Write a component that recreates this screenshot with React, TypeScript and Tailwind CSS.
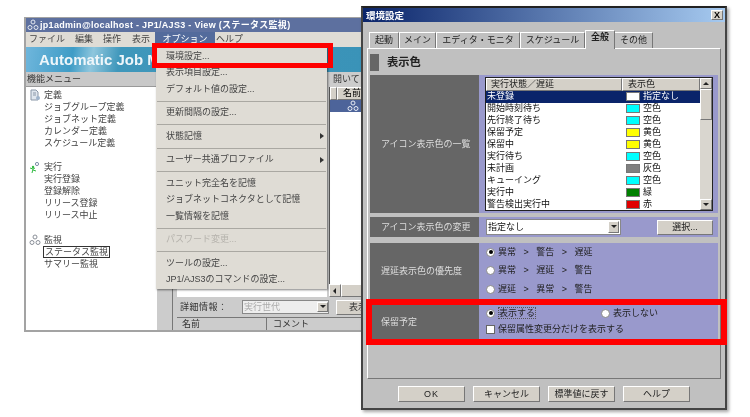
import type { ReactNode } from 'react';

const menuItems = [
  { label: '環境設定...' },
  { label: '表示項目設定...' },
  { label: 'デフォルト値の設定...', sep: true },
  { label: '更新間隔の設定...', sep: true },
  { label: '状態記憶', arrow: true, sep: true },
  { label: 'ユーザー共通プロファイル', arrow: true, sep: true },
  { label: 'ユニット完全名を記憶' },
  { label: 'ジョブネットコネクタとして記憶' },
  { label: '一覧情報を記憶', sep: true },
  { label: 'パスワード変更...', disabled: true, sep: true },
  { label: 'ツールの設定...' },
  { label: 'JP1/AJS3のコマンドの設定...' },
];

const statusRows = [
  { name: '未登録', color: 'bg-white', label: '指定なし', selected: true },
  { name: '開始時刻待ち', color: 'bg-[#00ffff]', label: '空色' },
  { name: '先行終了待ち', color: 'bg-[#00ffff]', label: '空色' },
  { name: '保留予定', color: 'bg-[#ffff00]', label: '黄色' },
  { name: '保留中', color: 'bg-[#ffff00]', label: '黄色' },
  { name: '実行待ち', color: 'bg-[#00ffff]', label: '空色' },
  { name: '未計画', color: 'bg-[#808080]', label: '灰色' },
  { name: 'キューイング', color: 'bg-[#00ffff]', label: '空色' },
  { name: '実行中', color: 'bg-[#008000]', label: '緑' },
  { name: '警告検出実行中', color: 'bg-[#e00000]', label: '赤' },
];

const raised = 'border border-t-white border-l-white border-r-[#777] border-b-[#777]';

function Arrow({ dir }: { dir: 'up' | 'down' | 'left' }) {
  const points = dir === 'up' ? '0,4 3,1 6,4' : dir === 'down' ? '0,1 6,1 3,4' : '4,0 4,6 1,3';
  return (
    <svg width="6" height="6" viewBox="0 0 6 6">
      <polygon points={points} fill="#222" />
    </svg>
  );
}

function Radio({ on }: { on?: boolean }) {
  return (
    <span className="flex h-[9px] w-[9px] shrink-0 items-center justify-center rounded-full border border-[#888] bg-white">
      {on && <span className="h-[4px] w-[4px] rounded-full bg-black" />}
    </span>
  );
}

function RadioRow({ text, on }: { text: string; on?: boolean }) {
  return (
    <div className="flex items-center gap-[3px]">
      <Radio on={on} />
      <span className="whitespace-pre">{text}</span>
    </div>
  );
}

function Section({ title, className, children }: { title: string; className: string; children: ReactNode }) {
  return (
    <div className={`flex shrink-0 ${className}`}>
      <div className="flex w-[109px] shrink-0 items-center bg-[#666666] pl-[11px] text-[#dddddd]">{title}</div>
      <div className="flex-1 bg-[#9999cc]">{children}</div>
    </div>
  );
}

function DialogButton({ children, wide }: { children: ReactNode; wide?: boolean }) {
  return (
    <div className={`flex h-[16px] items-center justify-center bg-[#d4d0c8] text-[#222] ${raised} ${wide ? 'tracking-[1px]' : ''} w-[67px]`}>
      {children}
    </div>
  );
}

function DefineIcon() {
  return (
    <svg width="12" height="12" viewBox="0 0 12 12">
      <path d="M2 1h5l2 2v8H2z" fill="#dfe6ee" stroke="#8a97a8" />
      <path d="M4 4h3M4 6h3" stroke="#8a97a8" />
      <circle cx="9" cy="9" r="2" fill="#9fb4cc" />
    </svg>
  );
}

function RunIcon() {
  return (
    <svg width="12" height="12" viewBox="0 0 12 12">
      <circle cx="8" cy="2" r="1.6" fill="none" stroke="#7d8fa8" />
      <circle cx="4" cy="5" r="1.2" fill="#33bb44" />
      <path d="M1 6l3 1 2-1M4 7L3 11M4 8l3 1" stroke="#33bb44" fill="none" />
    </svg>
  );
}

function WatchIcon({ color = '#8a8f98' }: { color?: string }) {
  return (
    <svg width="12" height="12" viewBox="0 0 12 12">
      <circle cx="6" cy="3" r="2" fill="none" stroke={color} />
      <circle cx="3" cy="8.5" r="2" fill="none" stroke={color} />
      <circle cx="9" cy="8.5" r="2" fill="none" stroke={color} />
    </svg>
  );
}

function TreeGroup({ icon, title, items, marked }: { icon: ReactNode; title: string; items: string[]; marked?: string }) {
  return (
    <div className="mb-[12.5px]">
      <div className="flex h-[12px] items-center gap-[3px] pl-[3px]">
        {icon}
        <span>{title}</span>
      </div>
      {items.map(item => (
        <div key={item} className="flex h-[12px] items-center pl-[18px]">
          <span className={item === marked ? 'border border-[#333] px-px leading-[10px] -ml-px' : ''}>{item}</span>
        </div>
      ))}
    </div>
  );
}

function MainWindow() {
  return (
    <div className="absolute left-[24px] top-[17px] flex h-[315px] w-[338px] flex-col border-b-2 border-l-2 border-t border-[#a3a3a3] bg-[#cccccc]">
      <div className="flex h-[14px] shrink-0 items-center gap-px bg-[#5d709f] pl-[1px] text-[9px] font-bold tracking-[0.3px] text-white">
        <WatchIcon color="#e4e8f0" />
        <span className="whitespace-nowrap">jp1admin@localhost - JP1/AJS3 - View (ステータス監視)</span>
      </div>
      <div className="relative h-[15px] shrink-0 bg-[#dfdcd5]">
        <div className="flex h-full items-center whitespace-nowrap pl-[3px] text-[#444]">
          <span className="w-[46px]">ファイル</span>
          <span className="w-[28px]">編集</span>
          <span className="w-[29px]">操作</span>
          <span className="w-[23px]">表示</span>
          <span className="flex h-full w-[60px] items-center justify-center bg-[#536b9c] text-white">オプション</span>
          <span className="pl-[1px]">ヘルプ</span>
        </div>
      </div>
      <div className="flex h-[25px] shrink-0 items-center bg-[linear-gradient(100deg,#6fb6dc_0%,#3f9cc6_14%,#8ec6dd_20%,#3f97bb_28%,#3a93b8_100%)] pl-[13px] text-[15px] leading-none font-bold whitespace-nowrap text-[#eef6fa]">
        Automatic Job M
      </div>
      <div className="flex min-h-0 flex-1">
        <div className="flex w-[131px] shrink-0 flex-col">
          <div className="flex h-[15px] shrink-0 items-center border-b border-[#999] bg-[#c8c8c8] pl-[1px] text-[#333]">機能メニュー</div>
          <div className="flex-1 bg-white pt-[2px] text-[#444]">
            <TreeGroup icon={<DefineIcon />} title="定義" items={['ジョブグループ定義', 'ジョブネット定義', 'カレンダー定義', 'スケジュール定義']} />
            <TreeGroup icon={<RunIcon />} title="実行" items={['実行登録', '登録解除', 'リリース登録', 'リリース中止']} />
            <TreeGroup icon={<WatchIcon />} title="監視" items={['ステータス監視', 'サマリー監視']} marked="ステータス監視" />
          </div>
        </div>
        <div className="flex min-w-0 flex-1 bg-[#cccccc] pl-[15px]">
          <div className="flex w-[5px] shrink-0 border-l border-[#777]" />
          <div className="flex min-h-0 min-w-0 flex-1 flex-col overflow-hidden">
            <div className="flex h-[225px] shrink-0">
              <div className="mt-[15px] w-[150px] shrink-0 bg-white" />
              <div className="ml-[2px] flex min-w-0 flex-1 flex-col overflow-hidden">
                <div className="flex h-[15px] shrink-0 items-center pl-[4px] whitespace-nowrap text-[#333]">開いて</div>
                <div className="flex h-[13px] shrink-0 border-l border-[#555] bg-[#d4d0c8]">
                  <span className={`w-[14px] ${raised}`} />
                  <span className={`flex-1 pl-[5px] whitespace-nowrap ${raised}`}>名前</span>
                </div>
                <div className="flex-1 border-l border-[#555] bg-white">
                  <div className="flex h-[12px] items-center bg-[#4d649a] pl-[17px]">
                    <WatchIcon color="#e8ecf4" />
                  </div>
                </div>
                <div className="flex h-[13px] shrink-0 items-center bg-[#d4d0c8]">
                  <span className={`flex h-[13px] w-[12px] items-center justify-center ${raised}`}><Arrow dir="left" /></span>
                  <span className={`h-[13px] flex-1 ${raised}`} />
                </div>
              </div>
            </div>
            <div className="flex h-[20px] shrink-0 items-center pl-[3px] text-[#333]">
              <span className="w-[62px] shrink-0 tracking-[0.5px]">詳細情報：</span>
              <div className="flex h-[14px] w-[87px] shrink-0 items-center justify-between border border-[#888] bg-[#eeeeee] pl-[1px] text-[#aaa]">
                <span>実行世代</span>
                <span className={`flex h-[10px] w-[11px] items-center justify-center bg-[#d4d0c8] ${raised}`}><Arrow dir="down" /></span>
              </div>
              <div className={`ml-[7px] flex h-[15px] w-[40px] shrink-0 items-center pl-[12px] whitespace-nowrap bg-[#d4d0c8] ${raised}`}>表示</div>
            </div>
            <div className="flex min-h-0 flex-1 border-t border-[#777] text-[#333]">
              <span className="w-[90px] border-r border-[#777] pl-[5px] leading-[12px]">名前</span>
              <span className="pl-[6px] leading-[12px]">コメント</span>
            </div>
          </div>
        </div>
      </div>
    </div>
  );
}

function OptionMenu() {
  return (
    <div className="absolute left-[156px] top-[46px] w-[171px] bg-[#dfdcd5] pt-[2px] pb-px text-[#444] shadow-[1px_1px_2px_rgba(0,0,0,0.5)]">
      {menuItems.map(item => (
        <div key={item.label}>
          <div className={`flex h-[16.5px] items-center justify-between pl-[10px] pr-[3px] whitespace-nowrap ${item.disabled ? 'text-[#b5b2ac]' : ''}`}>
            <span>{item.label}</span>
            {item.arrow && (
              <svg width="4" height="6" viewBox="0 0 4 6">
                <polygon points="0,0 4,3 0,6" fill="#333" />
              </svg>
            )}
          </div>
          {item.sep && <div className="mx-[1px] my-[3px] h-px bg-[#aaa8a2]" />}
        </div>
      ))}
    </div>
  );
}

function StatusList() {
  return (
    <div className="ml-[6px] mr-[5px] mt-[2px] flex h-[134px] border border-[#222] bg-white">
      <div className="flex min-w-0 flex-1 flex-col">
        <div className="flex h-[13px] shrink-0 bg-[#d4d0c8] text-[#222]">
          <span className={`w-[136px] pl-[4px] ${raised}`}>実行状態／遅延</span>
          <span className={`flex-1 pl-[5px] ${raised}`}>表示色</span>
        </div>
        {statusRows.map(row => (
          <div key={row.name} className={`flex min-h-0 flex-1 items-center ${row.selected ? 'bg-[#0a246a] text-white' : 'text-[#111]'}`}>
            <span className="w-[136px] pl-px">{row.name}</span>
            <span className={`ml-[4px] h-[9px] w-[14px] border border-[#777] ${row.color}`} />
            <span className="ml-[3px]">{row.label}</span>
          </div>
        ))}
      </div>
      <div className="flex w-[12px] shrink-0 flex-col bg-[#d9d6cf]">
        <span className={`flex h-[11px] items-center justify-center bg-[#d4d0c8] ${raised}`}><Arrow dir="up" /></span>
        <span className={`h-[31px] bg-[#d4d0c8] ${raised}`} />
        <span className="flex-1" />
        <span className={`flex h-[11px] items-center justify-center bg-[#d4d0c8] ${raised}`}><Arrow dir="down" /></span>
      </div>
    </div>
  );
}

function SettingsDialog() {
  const tabs = ['起動', 'メイン', 'エディタ・モニタ', 'スケジュール'];
  const tabWidths = ['w-[30px]', 'w-[37px]', 'w-[84px]', 'w-[65px]'];
  return (
    <div className="absolute left-[361px] top-[6px] flex h-[404px] w-[366px] flex-col border-2 border-[#444] border-t-[#222] bg-[#c0c0c0] shadow-[2px_2px_3px_rgba(0,0,0,0.35)]">
      <div className="flex h-[14px] shrink-0 items-center justify-between bg-[linear-gradient(90deg,#0a246a,#a6caf0)] pl-[3px] pr-[2px] text-[9.5px] font-bold text-white">
        <span>環境設定</span>
        <span className={`flex h-[10px] w-[12px] items-center justify-center bg-[#d4d0c8] text-[9px] leading-none text-black ${raised}`}>X</span>
      </div>
      <div className="mt-[9px] flex h-[17px] shrink-0 items-end pl-[6px] text-[#222]">
        {tabs.map((tab, i) => (
          <div key={tab} className={`flex h-[16px] ${tabWidths[i]} items-center justify-center border-l border-r border-t border-l-white border-r-[#777] border-t-white whitespace-nowrap`}>{tab}</div>
        ))}
        <div className="relative -mb-px flex h-[19px] w-[30px] items-center justify-center border-l border-r border-t border-l-white border-r-[#777] border-t-white bg-[#c0c0c0] pb-[5px] font-bold">全般</div>
        <div className="flex h-[16px] w-[38px] items-center justify-center border-r border-t border-r-[#777] border-t-white">その他</div>
      </div>
      <div className="mx-[4px] flex h-[331px] shrink-0 flex-col border border-b-[#777] border-l-white border-r-[#777] border-t-white px-[2px] pt-[5px]">
        <div className="flex h-[17px] shrink-0 items-center">
          <span className="h-[17px] w-[9px] bg-[#666666]" />
          <span className="ml-[8px] text-[11.3px] font-bold text-[#222]">表示色</span>
        </div>
        <Section title="アイコン表示色の一覧" className="mt-[4px] h-[138px]">
          <StatusList />
        </Section>
        <Section title="アイコン表示色の変更" className="mt-[4px] h-[20px]">
          <div className="flex h-full items-center pl-[7px]">
            <div className="flex h-[16px] w-[135px] items-center justify-between border border-[#888] bg-white pl-[1px] pr-px text-[#111]">
              <span>指定なし</span>
              <span className={`flex h-[12px] w-[11px] items-center justify-center bg-[#d4d0c8] ${raised}`}><Arrow dir="down" /></span>
            </div>
            <div className={`ml-[36px] flex h-[15px] w-[56px] items-center justify-center bg-[#d4d0c8] text-[#222] ${raised}`}>選択...</div>
          </div>
        </Section>
        <Section title="遅延表示色の優先度" className="mt-[6px] h-[57px]">
          <div className="flex flex-col gap-[7.5px] pl-[7px] pt-[3.5px] text-[#222]">
            <RadioRow on text="異常   >   警告   >   遅延" />
            <RadioRow text="異常   >   遅延   >   警告" />
            <RadioRow text="遅延   >   異常   >   警告" />
          </div>
        </Section>
        <Section title="保留予定" className="mt-[5px] h-[34px]">
          <div className="flex flex-col gap-[4.5px] pl-[7px] pt-[2px] text-[#222]">
            <div className="flex">
              <div className="flex w-[115px] items-center gap-[3px]">
                <Radio on />
                <span className="border border-dotted border-[#555] leading-[10px]">表示する</span>
              </div>
              <RadioRow text="表示しない" />
            </div>
            <div className="flex items-center gap-[3px]">
              <span className="h-[9px] w-[9px] border border-[#666] bg-white" />
              <span>保留属性変更分だけを表示する</span>
            </div>
          </div>
        </Section>
      </div>
      <div className="mt-[7px] flex gap-[8px] pl-[35px]">
        <DialogButton wide>OK</DialogButton>
        <DialogButton>キャンセル</DialogButton>
        <DialogButton>標準値に戻す</DialogButton>
        <DialogButton>ヘルプ</DialogButton>
      </div>
    </div>
  );
}

export default function App() {
  return (
    <div className="relative h-[417px] w-[750px] overflow-hidden bg-white text-[9px] leading-[11px] blur-[0.3px] [font-family:'Liberation_Sans','Noto_Sans_CJK_JP',sans-serif]">
      <MainWindow />
      <OptionMenu />
      <SettingsDialog />
      {/* 強調の赤枠 */}
      <div className="absolute left-[152px] top-[43px] h-[25px] w-[181px] border-[5px] border-[#ff0000]" />
      <div className="absolute left-[366px] top-[299px] h-[46px] w-[361px] border-[6px] border-[#ff0000]" />
    </div>
  );
}
